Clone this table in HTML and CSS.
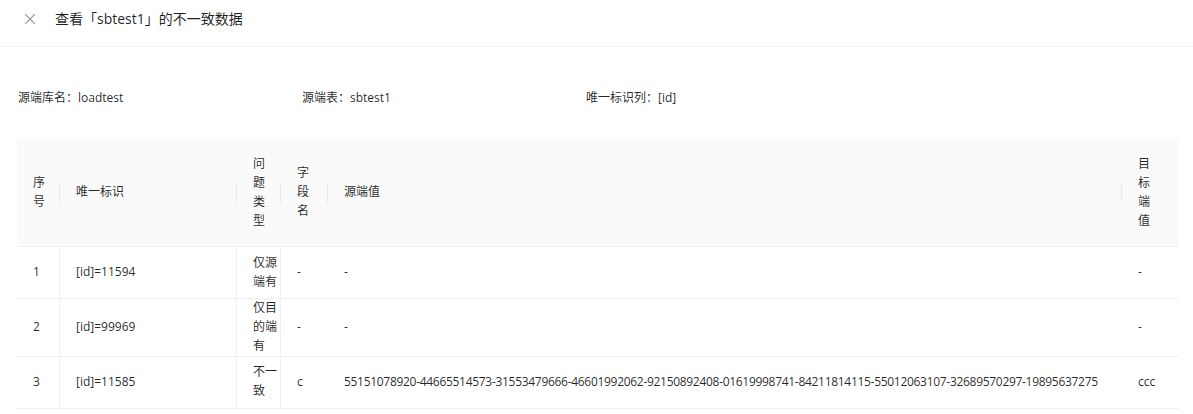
FILE: index.html
```html
<!DOCTYPE html>
<html lang="zh-CN">
<head>
<meta charset="utf-8">
<title>查看「sbtest1」的不一致数据</title>
<link rel="stylesheet" href="styles.css">
</head>
<body>
<div class="drawer">
  <div class="drawer-header">
    <svg class="close-icon" width="10" height="10" viewBox="0 0 10 10" aria-hidden="true">
      <path d="M0.5 0.5 L9.5 9.5 M9.5 0.5 L0.5 9.5" stroke="#9a9a9a" stroke-width="1.2" fill="none" stroke-linecap="square"/>
    </svg>
    <div class="drawer-title">查看「sbtest1」的不一致数据</div>
  </div>
  <div class="drawer-body">
    <div class="info">
      <div class="info-item">源端库名：loadtest</div>
      <div class="info-item">源端表：sbtest1</div>
      <div class="info-item">唯一标识列：[id]</div>
    </div>
    <table class="diff-table">
      <colgroup>
        <col class="c-idx">
        <col class="c-key">
        <col class="c-type">
        <col class="c-field">
        <col class="c-src">
        <col class="c-dst">
      </colgroup>
      <thead>
        <tr>
          <th class="sep">序号</th>
          <th class="sep">唯一标识</th>
          <th class="sep">问题类型</th>
          <th class="sep">字段名</th>
          <th class="sep">源端值</th>
          <th class="last">目标端值</th>
        </tr>
      </thead>
      <tbody>
        <tr>
          <td class="bd">1</td>
          <td class="bd">[id]=11594</td>
          <td class="bd type">仅源端有</td>
          <td>-</td>
          <td>-</td>
          <td>-</td>
        </tr>
        <tr>
          <td class="bd">2</td>
          <td class="bd">[id]=99969</td>
          <td class="bd type">仅目的端有</td>
          <td>-</td>
          <td>-</td>
          <td>-</td>
        </tr>
        <tr>
          <td class="bd">3</td>
          <td class="bd">[id]=11585</td>
          <td class="bd type">不一致</td>
          <td>c</td>
          <td class="long">55151078920-44665514573-31553479666-46601992062-92150892408-01619998741-84211814115-55012063107-32689570297-19895637275</td>
          <td>ccc</td>
        </tr>
      </tbody>
    </table>
  </div>
</div>
</body>
</html>
```

FILE: styles.css
```css
* {
  box-sizing: border-box;
}

html, body {
  margin: 0;
  padding: 0;
  background: #ffffff;
}

body {
  font-family: "Open Sans", "Noto Sans CJK SC", sans-serif;
  color: rgba(0, 0, 0, 0.85);
  font-size: 12px;
}

.drawer {
  width: 1193px;
}

.drawer-header {
  display: flex;
  align-items: center;
  height: 47px;
  padding: 0 24px 8px 25px;
  border-bottom: 1px solid #f0f0f0;
}

.close-icon {
  flex: none;
  display: block;
}

.drawer-title {
  margin-left: 20px;
  font-size: 14px;
  line-height: 20px;
  color: rgba(0, 0, 0, 0.88);
}

.drawer-body {
  padding: 41px 14px 0 17px;
}

.info {
  display: flex;
  line-height: 19px;
  margin-left: 1px;
  margin-bottom: 32px;
}

.info-item {
  width: 284px;
}

.diff-table {
  width: 100%;
  table-layout: fixed;
  border-collapse: separate;
  border-spacing: 0;
  font-size: 12px;
  line-height: 18.86px;
}

.c-idx { width: 43px; }
.c-key { width: 177px; }
.c-type { width: 44px; }
.c-field { width: 47px; }
.c-src { width: 794px; }
.c-dst { width: 57px; }

.diff-table th {
  position: relative;
  background: #fafafa;
  font-weight: 400;
  text-align: left;
  padding: 16px;
  vertical-align: middle;
  border-bottom: 1px solid #f0f0f0;
}

.diff-table th.sep::after {
  content: "";
  position: absolute;
  right: 0;
  top: 50%;
  width: 1px;
  height: 20px;
  margin-top: -10px;
  background: rgba(0, 0, 0, 0.06);
}

.diff-table th.last {
  padding-right: 30px;
}

.diff-table td {
  padding: 16px;
  vertical-align: middle;
  border-bottom: 1px solid #f0f0f0;
  word-break: break-all;
}

.diff-table td.bd {
  border-right: 1px solid #f0f0f0;
}

.diff-table td.type {
  padding: 0 2px 0 16px;
}

.diff-table td.long {
  white-space: nowrap;
  letter-spacing: -0.3px;
}
```
